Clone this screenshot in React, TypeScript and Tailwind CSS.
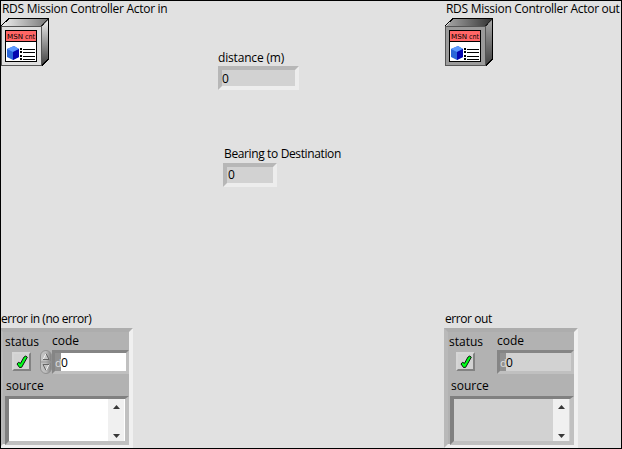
import React from "react";

function Label({ children, className = "" }: { children: React.ReactNode; className?: string }) {
  return (
    <div className={"h-4 whitespace-nowrap text-[12px] leading-4 text-black " + className}>{children}</div>
  );
}

function ActorIcon({ id, face, light, dark }: { id: string; face: string; light: string; dark: string }) {
  return (
    <svg width="48" height="48" viewBox="0 0 48 48" className="block" shapeRendering="crispEdges">
      <defs>
        <linearGradient id={id + "top"} x1="0" x2="1">
          <stop offset="0" stopColor={light} />
          <stop offset="1" stopColor={dark} />
        </linearGradient>
        <linearGradient id={id + "side"} x1="0" x2="0" y1="0" y2="1">
          <stop offset="0" stopColor={light} />
          <stop offset="1" stopColor="#444" />
        </linearGradient>
      </defs>
      <path d="M1 8 L9 1 H47 V40 L41 47 H1Z" fill="#777" />
      <path d="M1 8 L9 1 H47 L40 8Z" fill={"url(#" + id + "top)"} />
      <path d="M41 8 L47 2 V40 L41 46Z" fill={"url(#" + id + "side)"} />
      <path d="M0 8 L8 0.5 H47.5 V41 L41 47.5" fill="none" stroke="#000" />
      <rect x="0.5" y="8.5" width="40" height="39" fill={face} stroke="#555" />
      <path d="M40.5 8 L47 1" stroke="#222" />
      <rect x="4" y="12" width="32" height="32" fill="#000" />
      <rect x="5" y="13" width="30" height="10" fill="#ff6666" />
      <rect x="5" y="24" width="30" height="19" fill="#fff" />
      <g fontFamily="'DejaVu Sans', sans-serif" fontSize="7" fill="#000">
        <text x="6" y="21" textLength="16" lengthAdjust="spacingAndGlyphs">MSN</text>
        <text x="24" y="21" textLength="10" lengthAdjust="spacingAndGlyphs">cnt</text>
      </g>
      <g shapeRendering="auto">
        <path d="M6 31 L13 28 L18 31 V39 L12 42 L6 39Z" fill="#2a66d8" />
        <path d="M6 31 L13 28 L18 31 L12 34Z" fill="#5c98ff" />
        <path d="M12 34 L18 31 V39 L12 42Z" fill="#0505b0" />
      </g>
      <path d="M19 31h2M19 34h2M19 38h2M19 41h2" stroke="#000" strokeWidth="2" />
      <path d="M22 31.5H34M22 34.5H34M22 38.5H34M22 41.5H34" stroke="#000" />
    </svg>
  );
}

function Indicator({ className }: { className: string }) {
  return (
    <div className={"flex h-6 border-4 border-t-[#b7b7b7] border-r-[#ededed] border-b-[#ededed] border-l-[#b7b7b7] bg-[#d2d2d2] text-[12px] " + className}>
      0
    </div>
  );
}

function Check() {
  return (
    <div className="flex h-[19px] w-[19px] items-center justify-center border-2 border-t-[#d6d6d6] border-r-[#828282] border-b-[#828282] border-l-[#d6d6d6] bg-[#d2d2d2]">
      <svg width="12" height="14" viewBox="0 0 12 14" className="shrink-0">
        <path d="M9.8 1 L11.3 2.2 L5.7 12.3 L3.5 12.5 L1 9 L2.5 7.3 L4.5 8.3 L8 2Z" fill="#00ff1a" stroke="#000" strokeWidth=".9" />
      </svg>
    </div>
  );
}

function Spinner() {
  return (
    <svg width="12" height="24" viewBox="0 0 12 24" className="block">
      <defs>
        <linearGradient id="spin" x1="0" x2="1">
          <stop offset="0" stopColor="#c4c4c4" />
          <stop offset=".5" stopColor="#bcbcbc" />
          <stop offset="1" stopColor="#7c7c7c" />
        </linearGradient>
      </defs>
      <rect x=".5" y=".5" width="11" height="23" rx="5.5" fill="url(#spin)" stroke="#909090" />
      <path d="M1 12H11" stroke="#999" />
      <path d="M3 9.5L6 3.5L9 9.5ZM3 14.5L6 20.5L9 14.5Z" fill="#c4c4c4" />
      <path d="M3 9.5L6 3.5M6 20.5L9 14.5" stroke="#eee" />
      <path d="M6 3.5L9 9.5H3M3 14.5H9M3 14.5L6 20.5" fill="none" stroke="#666" />
    </svg>
  );
}

function ErrorCluster({ input = false }: { input?: boolean }) {
  const field = input ? "bg-white" : "bg-[#d2d2d2]";
  return (
    <div className="h-[120px] w-[134px] border-4 border-t-[#adadad] border-r-[#f0f0f0] border-b-[#f0f0f0] border-l-[#b9b9b9] bg-[#b2b2b2]">
      <div className="flex h-[47px]">
        <div className={"w-[37px] pt-[2px] " + (input ? "pl-[2px]" : "pl-px")}>
          <Label>status</Label>
          <div className="pl-[7px] pt-[2px]"><Check /></div>
        </div>
        <div className="w-[12px] pt-[18px]">{input && <Spinner />}</div>
        <div className="w-[77px] pt-px">
          <Label>code</Label>
          <div className={"mt-[1px] flex h-6 w-[77px] border-[3px] border-t-[#858585] border-r-[#c0c0c0] border-b-[#c0c0c0] border-l-[#858585] text-[12px] leading-[19px] " + field}>
            <span className="w-[6px] bg-[#919191] text-[11px] text-[#dedede]">d</span>
            <span>0</span>
          </div>
        </div>
      </div>
      <Label className="-mt-[1px] pl-[3px]">source</Label>
      <div className={"ml-[2px] mt-[2px] flex h-[49px] w-[124px] justify-end border-4 border-t-[3px] border-t-[#808080] border-r-[#c0c0c0] border-b-[#c0c0c0] border-l-[#808080] " + field}>
        <div className="mr-px flex w-4 flex-col items-center justify-between bg-[#f0f0f0] pb-[3px] pt-[6px]">
          <svg width="7" height="4" viewBox="0 0 7 4"><path d="M0 4L3.5 0L7 4Z" fill="#383838" /></svg>
          <svg width="7" height="4" viewBox="0 0 7 4"><path d="M0 0L3.5 4L7 0Z" fill="#383838" /></svg>
        </div>
      </div>
    </div>
  );
}

export default function App() {
  return (
    <main className="flex h-[449px] w-[622px] overflow-hidden border border-black bg-[#e1e1e1] font-['Open_Sans','Noto_Sans',sans-serif] text-black">
      <section className="-ml-[2px] flex w-[219px] flex-col justify-between">
        <div className="pl-[2px]">
          <Label className="pl-px tracking-[-0.29px]">RDS Mission Controller Actor in</Label>
          <div className="mt-px"><ActorIcon id="in" face="#dedede" light="#eeeeee" dark="#777777" /></div>
        </div>
        <div>
          <Label className="pl-[2px] tracking-[-0.44px]">error in (no error)</Label>
          <div className="mt-px"><ErrorCluster input /></div>
        </div>
      </section>
      <section className="w-[226px] pt-[49px]">
        <Label className="tracking-[-0.18px]">distance (m)</Label>
        <Indicator className="w-[81px] leading-[17px]" />
        <Label className="mt-[56px] pl-[6px] tracking-[-0.37px]">Bearing to Destination</Label>
        <div className="pl-[5px] pt-px"><Indicator className="w-[54px] pl-px leading-4" /></div>
      </section>
      <section className="flex w-[177px] flex-col justify-between">
        <div className="pl-px">
          <Label className="pl-px tracking-[-0.29px]">RDS Mission Controller Actor out</Label>
          <div className="mt-px"><ActorIcon id="out" face="#9b9b9b" light="#a8a8a8" dark="#333333" /></div>
        </div>
        <div>
          <Label className="pl-px tracking-[-0.43px]">error out</Label>
          <div className="mt-px"><ErrorCluster /></div>
        </div>
      </section>
    </main>
  );
}
